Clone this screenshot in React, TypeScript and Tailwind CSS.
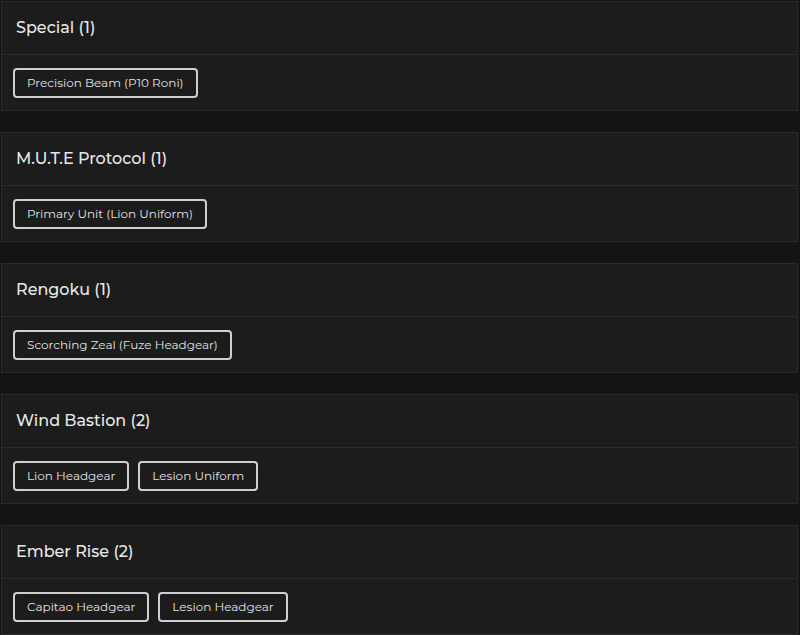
import React from "react";

const groups = [
  { title: "Special", items: ["Precision Beam (P10 Roni)"] },
  { title: "M.U.T.E Protocol", items: ["Primary Unit (Lion Uniform)"] },
  { title: "Rengoku", items: ["Scorching Zeal (Fuze Headgear)"] },
  { title: "Wind Bastion", items: ["Lion Headgear", "Lesion Uniform"] },
  { title: "Ember Rise", items: ["Capitao Headgear", "Lesion Headgear"] },
];

function GroupCard({ title, items }: { title: string; items: string[] }) {
  return (
    <div className="border border-[#2a2a2a] bg-[#1c1c1c]">
      <div className="h-[53px] flex items-center px-[14px] border-b border-[#2c2c2c]">
        <h3 className="text-[16px] font-medium text-[#e8e8e8]">
          {title} ({items.length})
        </h3>
      </div>
      <div className="flex flex-wrap gap-[9px] pl-[11px] pr-[12px] pt-[13px] pb-[12px]">
        {items.map((item) => (
          <span
            key={item}
            className="h-[30px] flex items-center px-[12px] rounded-[4px] border-2 border-[#cfcfcf] text-[12px] text-[#e2e2e2] bg-[#1c1c1c]"
          >
            {item}
          </span>
        ))}
      </div>
    </div>
  );
}

export default function App() {
  return (
    <div
      className="w-[800px] h-[635px] overflow-hidden bg-[#141414] pt-[1px] pl-[1px] pr-[2px]"
      style={{ fontFamily: "Montserrat, 'Open Sans', 'Noto Sans', sans-serif" }}
    >
      <div className="flex flex-col gap-[21px]">
        {groups.map((g) => (
          <GroupCard key={g.title} title={g.title} items={g.items} />
        ))}
      </div>
    </div>
  );
}
